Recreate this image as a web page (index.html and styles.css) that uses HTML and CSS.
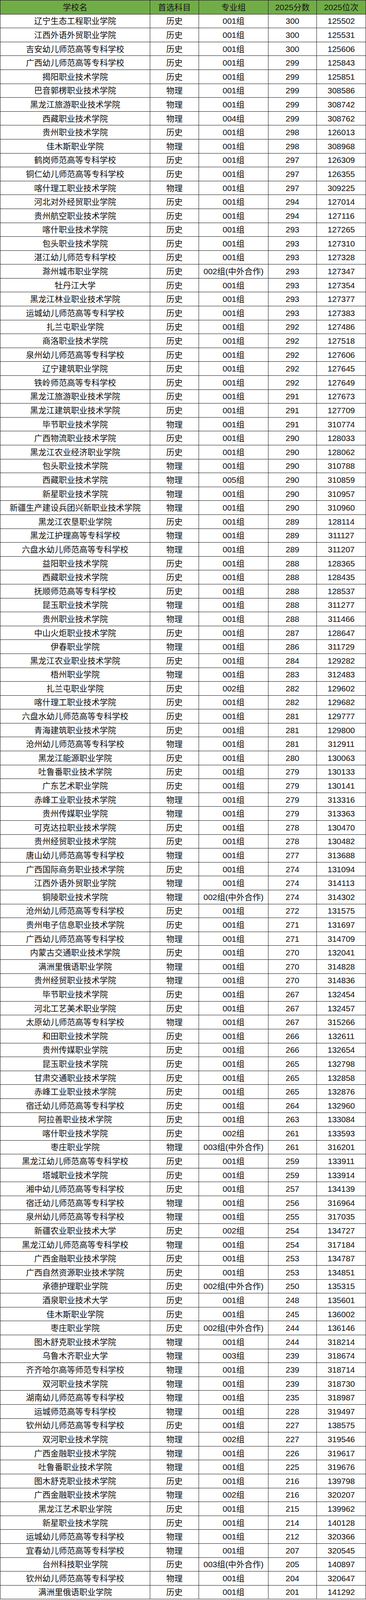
FILE: index.html
```html
<!DOCTYPE html>
<html lang="zh-CN">
<head>
<meta charset="utf-8">
<title>2025分数位次</title>
<link rel="stylesheet" href="styles.css">
</head>
<body>
<div class="sheet" id="sheet">
  <div class="cell head">学校名</div>
  <div class="cell head">首选科目</div>
  <div class="cell head">专业组</div>
  <div class="cell head">2025分数</div>
  <div class="cell head">2025位次</div>
</div>
<script src="app.js"></script>
</body>
</html>
```

FILE: styles.css
```css
html, body {
  margin: 0;
  padding: 0;
  background: #ffffff;
}

/* The capture window is 4096px tall; rows are sized so all 115 rows fit it. */
.sheet {
  display: grid;
  grid-template-columns: 384px 125px 178px 124px 126px;
  grid-auto-rows: calc(4095px / 115);
  width: 938px;
  box-sizing: border-box;
  border-top: 1px solid #141414;
  border-left: 1px solid #141414;
  font-family: "Liberation Sans", "Noto Sans CJK SC", Arial, sans-serif;
  font-size: 21px;
  color: #0d0d0d;
}

.cell {
  box-sizing: border-box;
  border-right: 1px solid #141414;
  border-bottom: 1px solid #141414;
  display: flex;
  align-items: center;
  justify-content: center;
  white-space: nowrap;
  overflow: hidden;
  line-height: 1;
}

.head {
  background: #70ad47;
  color: #161616;
}
```

FILE: app.js
```js
var rows = [
["辽宁生态工程职业学院","历史","001组","300","125502"],
["江西外语外贸职业学院","历史","001组","300","125531"],
["吉安幼儿师范高等专科学校","历史","001组","300","125606"],
["广西幼儿师范高等专科学校","历史","001组","299","125843"],
["揭阳职业技术学院","历史","001组","299","125851"],
["巴音郭楞职业技术学院","物理","001组","299","308586"],
["黑龙江旅游职业技术学院","物理","001组","299","308742"],
["西藏职业技术学院","物理","004组","299","308762"],
["贵州职业技术学院","历史","001组","298","126013"],
["佳木斯职业学院","物理","001组","298","308968"],
["鹤岗师范高等专科学校","历史","001组","297","126309"],
["铜仁幼儿师范高等专科学校","历史","001组","297","126355"],
["喀什理工职业技术学院","物理","001组","297","309225"],
["河北对外经贸职业学院","历史","001组","294","127014"],
["贵州航空职业技术学院","历史","001组","294","127116"],
["喀什职业技术学院","历史","001组","293","127265"],
["包头职业技术学院","历史","001组","293","127310"],
["湛江幼儿师范专科学校","历史","001组","293","127328"],
["滁州城市职业学院","历史","002组(中外合作)","293","127347"],
["牡丹江大学","历史","001组","293","127354"],
["黑龙江林业职业技术学院","历史","001组","293","127377"],
["运城幼儿师范高等专科学校","历史","001组","293","127383"],
["扎兰屯职业学院","历史","001组","292","127486"],
["商洛职业技术学院","历史","001组","292","127518"],
["泉州幼儿师范高等专科学校","历史","001组","292","127606"],
["辽宁建筑职业学院","历史","001组","292","127645"],
["铁岭师范高等专科学校","历史","001组","292","127649"],
["黑龙江旅游职业技术学院","历史","001组","291","127673"],
["黑龙江建筑职业技术学院","历史","001组","291","127709"],
["毕节职业技术学院","物理","001组","291","310774"],
["广西物流职业技术学院","历史","001组","290","128033"],
["黑龙江农业经济职业学院","历史","001组","290","128062"],
["包头职业技术学院","物理","001组","290","310788"],
["西藏职业技术学院","物理","005组","290","310859"],
["新星职业技术学院","物理","001组","290","310957"],
["新疆生产建设兵团兴新职业技术学院","物理","001组","290","310960"],
["黑龙江农垦职业学院","历史","001组","289","128114"],
["黑龙江护理高等专科学校","物理","001组","289","311127"],
["六盘水幼儿师范高等专科学校","物理","001组","289","311207"],
["益阳职业技术学院","历史","001组","288","128365"],
["西藏职业技术学院","历史","001组","288","128435"],
["抚顺师范高等专科学校","历史","001组","288","128537"],
["昆玉职业技术学院","物理","001组","288","311277"],
["贵州职业技术学院","物理","001组","288","311466"],
["中山火炬职业技术学院","历史","001组","287","128647"],
["伊春职业学院","物理","001组","286","311729"],
["黑龙江农业职业技术学院","历史","001组","284","129282"],
["梧州职业学院","物理","001组","283","312483"],
["扎兰屯职业学院","历史","002组","282","129602"],
["喀什理工职业技术学院","历史","001组","282","129682"],
["六盘水幼儿师范高等专科学校","历史","001组","281","129777"],
["青海建筑职业技术学院","历史","001组","281","129800"],
["沧州幼儿师范高等专科学校","物理","001组","281","312911"],
["黑龙江能源职业学院","历史","001组","280","130063"],
["吐鲁番职业技术学院","历史","001组","279","130133"],
["广东艺术职业学院","历史","001组","279","130141"],
["赤峰工业职业技术学院","物理","001组","279","313316"],
["贵州传媒职业学院","物理","001组","279","313363"],
["可克达拉职业技术学院","历史","001组","278","130470"],
["贵州经贸职业技术学院","历史","001组","278","130482"],
["唐山幼儿师范高等专科学校","物理","001组","277","313688"],
["广西国际商务职业技术学院","历史","001组","274","131094"],
["江西外语外贸职业学院","物理","001组","274","314113"],
["铜陵职业技术学院","物理","002组(中外合作)","274","314302"],
["沧州幼儿师范高等专科学校","历史","001组","272","131575"],
["贵州电子信息职业技术学院","历史","001组","271","131697"],
["广西幼儿师范高等专科学校","物理","001组","271","314709"],
["内蒙古交通职业技术学院","历史","001组","270","132041"],
["满洲里俄语职业学院","物理","001组","270","314828"],
["贵州经贸职业技术学院","物理","001组","270","314836"],
["毕节职业技术学院","历史","001组","267","132454"],
["河北工艺美术职业学院","历史","001组","267","132457"],
["太原幼儿师范高等专科学校","物理","001组","267","315266"],
["和田职业技术学院","历史","001组","266","132611"],
["贵州传媒职业学院","历史","001组","266","132654"],
["昆玉职业技术学院","历史","001组","265","132798"],
["甘肃交通职业技术学院","历史","001组","265","132858"],
["赤峰工业职业技术学院","历史","001组","265","132876"],
["宿迁幼儿师范高等专科学校","历史","001组","264","132960"],
["阿拉善职业技术学院","历史","001组","263","133084"],
["喀什职业技术学院","历史","002组","261","133593"],
["枣庄职业学院","物理","003组(中外合作)","261","316201"],
["黑龙江幼儿师范高等专科学校","历史","001组","259","133911"],
["塔城职业技术学院","历史","001组","259","133914"],
["湘中幼儿师范高等专科学校","历史","001组","257","134139"],
["宿迁幼儿师范高等专科学校","物理","001组","256","316964"],
["泉州幼儿师范高等专科学校","物理","001组","255","317035"],
["新疆农业职业技术大学","历史","002组","254","134727"],
["黑龙江幼儿师范高等专科学校","物理","001组","254","317184"],
["广西金融职业技术学院","历史","001组","253","134787"],
["广西自然资源职业技术学院","历史","001组","253","134851"],
["承德护理职业学院","历史","002组(中外合作)","250","135315"],
["酒泉职业技术大学","历史","001组","248","135601"],
["佳木斯职业学院","历史","001组","245","136002"],
["枣庄职业学院","历史","002组(中外合作)","244","136146"],
["图木舒克职业技术学院","物理","001组","244","318214"],
["乌鲁木齐职业大学","物理","003组","239","318674"],
["齐齐哈尔高等师范专科学校","物理","001组","239","318714"],
["双河职业技术学院","物理","001组","239","318730"],
["湖南幼儿师范高等专科学校","物理","001组","235","318987"],
["运城师范高等专科学校","物理","001组","228","319497"],
["钦州幼儿师范高等专科学校","历史","001组","227","138575"],
["双河职业技术学院","物理","002组","227","319546"],
["广西金融职业技术学院","物理","001组","226","319617"],
["吐鲁番职业技术学院","物理","001组","225","319676"],
["图木舒克职业技术学院","历史","001组","216","139798"],
["广西金融职业技术学院","物理","002组","216","320207"],
["黑龙江艺术职业学院","历史","001组","215","139962"],
["新星职业技术学院","历史","001组","214","140128"],
["运城幼儿师范高等专科学校","物理","001组","212","320366"],
["宜春幼儿师范高等专科学校","物理","001组","207","320545"],
["台州科技职业学院","历史","003组(中外合作)","205","140897"],
["钦州幼儿师范高等专科学校","物理","001组","204","320647"],
["满洲里俄语职业学院","历史","001组","201","141292"]
];
var sheet = document.getElementById("sheet");
var frag = document.createDocumentFragment();
rows.forEach(function (r) {
  r.forEach(function (v) {
    var d = document.createElement("div");
    d.className = "cell";
    d.textContent = v;
    frag.appendChild(d);
  });
});
sheet.appendChild(frag);
```
